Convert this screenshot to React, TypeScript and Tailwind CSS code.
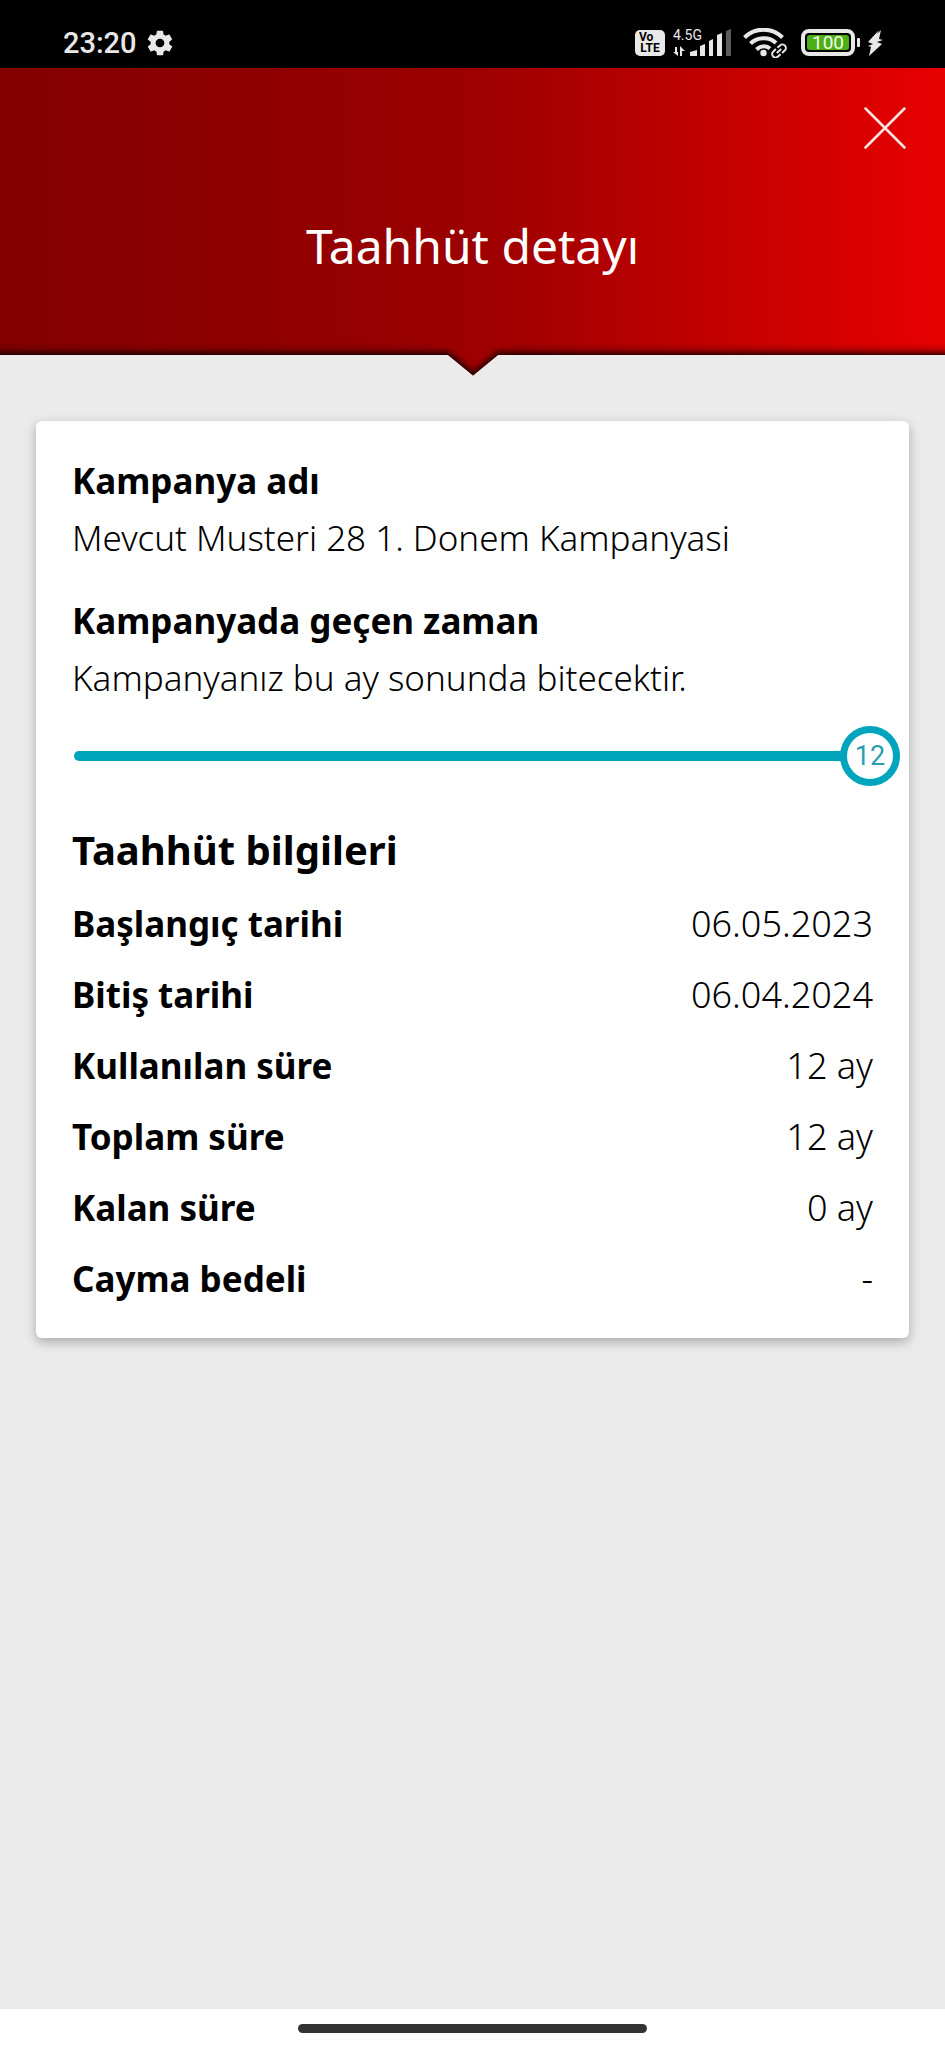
import { useState } from "react";
import { IoMdSettings } from "react-icons/io";

type Detail = { label: string; value: string };

const details: Detail[] = [
  { label: "Başlangıç tarihi", value: "06.05.2023" },
  { label: "Bitiş tarihi", value: "06.04.2024" },
  { label: "Kullanılan süre", value: "12 ay" },
  { label: "Toplam süre", value: "12 ay" },
  { label: "Kalan süre", value: "0 ay" },
  { label: "Cayma bedeli", value: "-" },
];

const TOTAL_MONTHS = 12;
const THUMB = 60;

function SignalIcon() {
  return (
    <svg width="58" height="34" viewBox="0 0 58 34" fill="#e8e8e8" aria-hidden="true">
      <text x="0" y="14" fontSize="14" fontFamily="Roboto, sans-serif">
        4.5G
      </text>
      <g transform="translate(0 3)">
        <path d="M3 18v6M8 27v-6" stroke="#e8e8e8" strokeWidth="2" />
        <path d="M0 23h5v4zM7 17v5h5z" />
        <path d="M17 27v-4l7-2v6zM27 27V17l5-2v12zM36 27V12l4-2v17zM44 27V6l5-2v23z" />
        <path d="M53 27V2l5-2v27z" fill="#5c5c5c" />
      </g>
    </svg>
  );
}

function WifiIcon() {
  return (
    <svg width="44" height="30" viewBox="0 0 44 30" fill="none" stroke="#e8e8e8" aria-hidden="true">
      <path d="M1.5 9.5C12-1 29-1 39.5 9.5" strokeWidth="4" />
      <path d="M7.5 15.5C14.5 8.5 26.5 8.5 33 15" strokeWidth="4" />
      <path d="M13.5 21.5C17.5 17.5 23.5 17.5 27 20.5" strokeWidth="4" />
      <circle cx="20.5" cy="25" r="3.2" fill="#e8e8e8" stroke="none" />
      <g transform="rotate(-42 36 23)" strokeWidth="2">
        <path d="M35 19.5h-3.5a3.5 3.5 0 0 0 0 7H35M37 19.5h3.5a3.5 3.5 0 0 1 0 7H37M33 23h6" />
      </g>
    </svg>
  );
}

function BatteryIcon() {
  return (
    <svg width="60" height="28" viewBox="0 0 60 28" aria-hidden="true">
      <rect x="2" y="2" width="50" height="23" rx="6" fill="none" stroke="#e8e8e8" strokeWidth="4" />
      <rect x="6" y="6" width="42" height="15" rx="3" fill="#4caf17" />
      <rect x="56" y="9" width="3" height="9" rx="1" fill="#e8e8e8" />
      <text x="27" y="20" fontSize="19" textAnchor="middle" fill="#f4fbe9" fontFamily="Roboto, sans-serif">
        100
      </text>
    </svg>
  );
}

function StatusBar() {
  return (
    <div className="flex h-[68px] items-center justify-between bg-black pt-[18px] pr-[58px] pl-[63px] font-[Roboto,sans-serif] text-[#e8e8e8]">
      <div className="flex items-center gap-2">
        <span className="text-[29px] leading-8 font-medium">23:20</span>
        <IoMdSettings size={30} aria-hidden="true" />
      </div>
      <div className="flex items-center">
        <div className="mr-2 flex h-[26px] w-[30px] flex-col items-center justify-center rounded-[5px] bg-[#e8e8e8] text-[12px] leading-[11px] font-bold text-black">
          <span className="self-start pl-1">Vo</span>
          <span>LTE</span>
        </div>
        <SignalIcon />
        <div className="w-3" />
        <WifiIcon />
        <div className="w-[14px]" />
        <BatteryIcon />
        <svg width="22" height="28" viewBox="0 0 22 28" fill="#e8e8e8" className="ml-1" aria-hidden="true">
          <path d="M14 1L3 13l5 2-5 2 3 1-2 9 13-12-5-2 6-2-4-1 2-9-4 4z" />
        </svg>
      </div>
    </div>
  );
}

function Header({ onClose }: { onClose: () => void }) {
  return (
    <header className="relative flex h-[287px] flex-col bg-linear-to-r from-[#820000] via-[#9c0000] to-[#e80000]">
      <button
        type="button"
        onClick={onClose}
        aria-label="Kapat"
        className="mt-8 mr-8 flex size-14 cursor-pointer items-center justify-center self-end"
      >
        <svg width="42" height="42" viewBox="0 0 42 42" stroke="#ffe6e2" strokeWidth="2.5" strokeLinecap="round" aria-hidden="true">
          <path d="M1.5 1.5l39 39M40.5 1.5l-39 39" />
        </svg>
      </button>
      <h1 className="mt-[54px] text-center text-[48px] leading-[72px] text-white">Taahhüt detayı</h1>
      {/* dark lower edge with the notch in the middle */}
      <div className="absolute inset-x-0 top-full -mt-5 flex items-start">
        <div className="mt-2 h-3 flex-1 bg-linear-to-b from-transparent via-black/15 to-black/70" />
        <svg width="80" height="41" viewBox="0 0 80 41" aria-hidden="true">
          <defs>
            <linearGradient id="notch">
              <stop offset="0" stopColor="#980000" />
              <stop offset="1" stopColor="#a40000" />
            </linearGradient>
            <clipPath id="notchClip">
              <path d="M0 0h80v20H65L40 40.5 15 20H0z" />
            </clipPath>
            <filter id="notchBlur" x="-20%" y="-50%" width="140%" height="200%">
              <feGaussianBlur stdDeviation="3" />
            </filter>
          </defs>
          <path d="M15 20h50L40 40.5 15 20z" fill="url(#notch)" />
          <g clipPath="url(#notchClip)">
            <path d="M-20 21h34l26 21 26-21h34" fill="none" stroke="#000" strokeOpacity=".85" strokeWidth="8" filter="url(#notchBlur)" />
          </g>
        </svg>
        <div className="mt-2 h-3 flex-1 bg-linear-to-b from-transparent via-black/15 to-black/70" />
      </div>
    </header>
  );
}

function MonthSlider() {
  const [month, setMonth] = useState(12);
  const ratio = month / TOTAL_MONTHS;

  return (
    <div className="relative mt-[18px] mr-[-27px] ml-[2px] h-[60px]">
      <input
        id="gecen-zaman"
        type="range"
        min={0}
        max={TOTAL_MONTHS}
        value={month}
        onChange={(e) => setMonth(Number(e.target.value))}
        className="block h-[60px] w-full cursor-pointer appearance-none bg-transparent outline-none [&::-webkit-slider-runnable-track]:h-[10px] [&::-webkit-slider-runnable-track]:rounded-full [&::-webkit-slider-runnable-track]:bg-[#00a5bd] [&::-webkit-slider-thumb]:-mt-[25px] [&::-webkit-slider-thumb]:size-[60px] [&::-webkit-slider-thumb]:appearance-none [&::-webkit-slider-thumb]:rounded-full [&::-webkit-slider-thumb]:border-[7px] [&::-webkit-slider-thumb]:border-solid [&::-webkit-slider-thumb]:border-[#00a5bd] [&::-webkit-slider-thumb]:bg-white"
      />
      <output
        htmlFor="gecen-zaman"
        className="pointer-events-none absolute top-0 flex size-[60px] items-center justify-center font-[Roboto,sans-serif] text-[27px] text-[#2a9fb3]"
        style={{ left: `calc((100% - ${THUMB}px) * ${ratio})` }}
      >
        {month}
      </output>
    </div>
  );
}

export default function App() {
  const [open, setOpen] = useState(true);

  return (
    <div className="flex min-h-screen flex-col bg-[#ebebeb] font-['Noto_Sans',sans-serif] text-black">
      <StatusBar />
      {open && (
        <>
          <Header onClose={() => setOpen(false)} />
          <main className="flex-1 px-9 pt-[66px] pb-9">
            <section className="rounded-md bg-white px-9 pt-[33px] pb-6 shadow-[0_4px_12px_rgba(0,0,0,0.28)]">
              <h2 className="text-[35px] leading-[54px] font-bold">Kampanya adı</h2>
              <p className="text-[35px] leading-[60px] font-light">Mevcut Musteri 28 1. Donem Kampanyasi</p>
              <label htmlFor="gecen-zaman" className="mt-[26px] block text-[35px] leading-[54px] font-bold">
                Kampanyada geçen zaman
              </label>
              <p className="text-[35px] leading-[60px] font-light">Kampanyanız bu ay sonunda bitecektir.</p>
              <MonthSlider />
              <h2 className="mt-8 mb-[6px] text-[40px] leading-[64px] font-bold">Taahhüt bilgileri</h2>
              <table className="w-full text-[35px] leading-[54px]">
                <tbody>
                  {details.map((d) => (
                    <tr key={d.label} className="h-[71px]">
                      <th scope="row" className="text-left font-bold">
                        {d.label}
                      </th>
                      <td className="text-right text-[36px] font-light">{d.value}</td>
                    </tr>
                  ))}
                </tbody>
              </table>
            </section>
          </main>
        </>
      )}
      <div className="mt-auto flex h-[39px] items-center justify-center bg-white">
        <div className="h-[9px] w-[37%] rounded-full bg-[#333333]" />
      </div>
    </div>
  );
}
